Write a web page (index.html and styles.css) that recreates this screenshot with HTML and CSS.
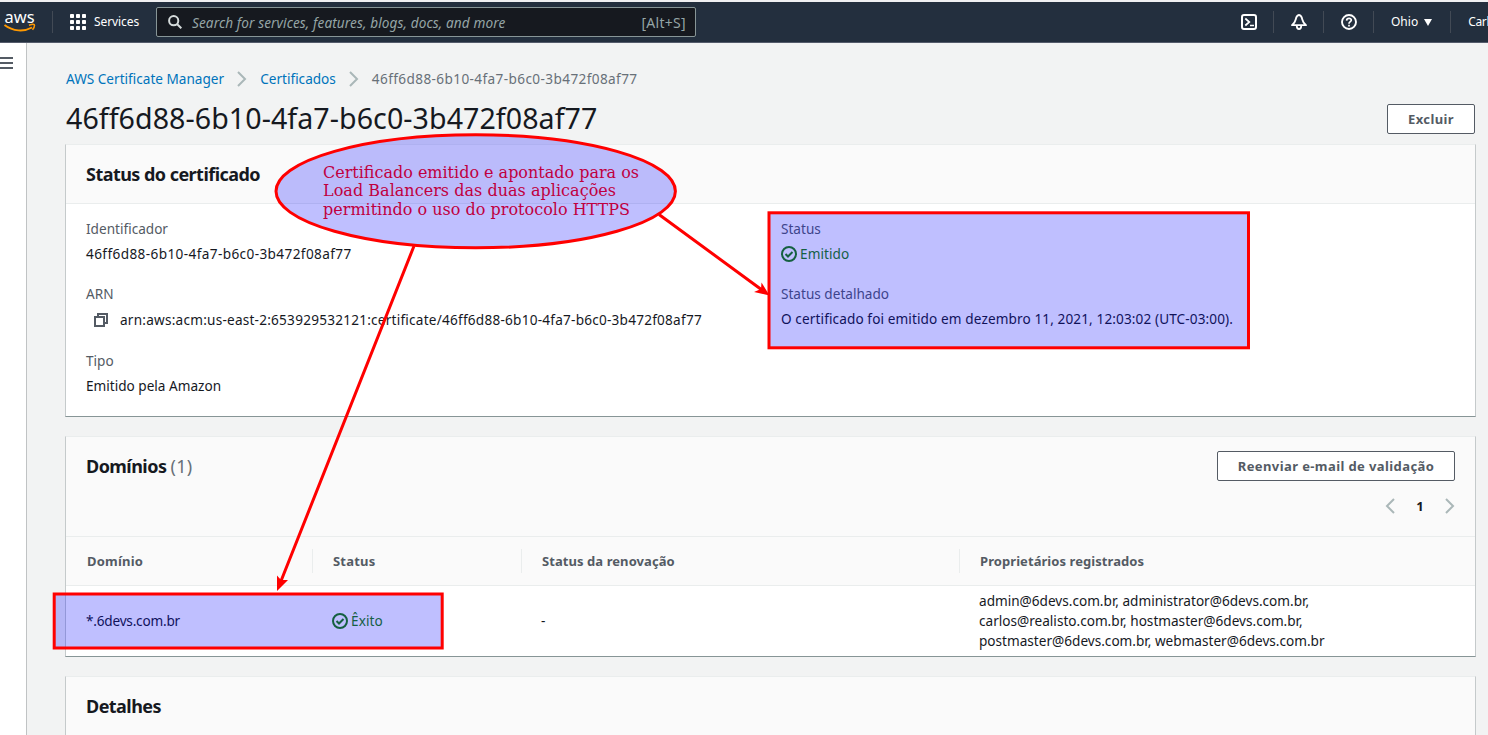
FILE: index.html
```html
<!DOCTYPE html>
<html lang="pt-BR">
<head>
<meta charset="utf-8">
<title>AWS Certificate Manager</title>
<link rel="stylesheet" href="styles.css">
</head>
<body>
<header class="nav">
  <svg class="nav-logo" width="32" height="24" viewBox="0 0 32 24">
    <text class="logo-text" x="0.5" y="12.500" textLength="30" lengthAdjust="spacingAndGlyphs">aws</text>
    <path d="M0.500 15C9 21.500 20 22 28 17.500" fill="none" stroke="#f90" stroke-width="1.900"/>
    <path d="M25 15.200Q30.500 13.500 30.500 15.200Q30.500 17.500 28.500 19.800" fill="none" stroke="#f90" stroke-width="1.500"/>
  </svg>
  <i class="nav-sep sep-logo"></i>
  <svg class="nav-grid" width="16" height="16" viewBox="0 0 16 16" fill="#fff">
    <rect width="4" height="4" rx=".8"/><rect x="6" width="4" height="4" rx=".8"/><rect x="12" width="4" height="4" rx=".8"/>
    <rect y="6" width="4" height="4" rx=".8"/><rect x="6" y="6" width="4" height="4" rx=".8"/><rect x="12" y="6" width="4" height="4" rx=".8"/>
    <rect y="12" width="4" height="4" rx=".8"/><rect x="6" y="12" width="4" height="4" rx=".8"/><rect x="12" y="12" width="4" height="4" rx=".8"/>
  </svg>
  <span class="nav-text services">Services</span>
  <div class="search">
    <svg width="14" height="14" viewBox="0 0 14 14" fill="none" stroke="#d5dbdb" stroke-width="2"><circle cx="5.700" cy="5.700" r="4.600"/><path d="M9 9l4.300 4.300"/></svg>
    <span class="search-hint">Search for services, features, blogs, docs, and more</span>
    <span class="search-key">[Alt+S]</span>
  </div>
  <div class="nav-right">
    <svg width="16" height="16" viewBox="0 0 16 16" fill="none" stroke="#fff" stroke-width="2"><rect x="1" y="1" width="14" height="14" rx="2"/><path d="M4.300 4.500l4 3.500-4 3.500M9 11.500h4" stroke-width="1.700"/></svg>
    <i class="nav-sep"></i>
    <svg width="16" height="16" viewBox="0 0 16 16" fill="none" stroke="#fff" stroke-width="1.800"><path d="M8 1C6.200 1.200 5.200 3 4.700 5.500C4.200 7.800 3 9.500 1 11.200H15C13 9.500 11.800 7.800 11.300 5.500C10.800 3 9.800 1.200 8 1ZM5.800 12C5.900 16 10.100 16 10.200 12" stroke-linejoin="round"/></svg>
    <i class="nav-sep"></i>
    <svg width="16" height="16" viewBox="0 0 16 16" fill="none" stroke="#fff" stroke-width="1.900"><circle cx="8" cy="8" r="7"/><path d="M5.600 6.600C5.700 3.500 10.500 3.700 10.300 6.300C10.200 7.700 8 7.700 8 9.700M8 10.700v1.800" stroke-width="1.700"/></svg>
    <i class="nav-sep"></i>
    <span class="nav-text ohio">Ohio</span><i class="caret"></i>
    <i class="nav-sep sep-user"></i>
    <span class="nav-text user">Carlos</span>
  </div>
</header>
<div class="shell">
  <aside class="side"><div class="burger"><i></i><i></i><i></i></div></aside>
  <main class="main">
    <nav class="crumbs">
      <a class="link">AWS Certificate Manager</a>
      <svg width="10" height="16" viewBox="0 0 10 16" fill="none" stroke="#aab7b8" stroke-width="2"><path d="M1 1l7 7-7 7"/></svg>
      <a class="link">Certificados</a>
      <svg width="10" height="16" viewBox="0 0 10 16" fill="none" stroke="#aab7b8" stroke-width="2"><path d="M1 1l7 7-7 7"/></svg>
      <span class="hash">46ff6d88-6b10-4fa7-b6c0-3b472f08af77</span>
    </nav>
    <div class="title-row">
      <h1>46ff6d88-6b10-4fa7-b6c0-3b472f08af77</h1>
      <button class="btn btn-del">Excluir</button>
    </div>
    <section class="card status-card">
      <div class="card-head"><h2>Status do certificado</h2></div>
      <div class="details">
        <dl>
          <dt>Identificador</dt>
          <dd class="hash">46ff6d88-6b10-4fa7-b6c0-3b472f08af77</dd>
          <dt>ARN</dt>
          <dd class="arn"><svg width="14" height="14" viewBox="0 0 14 14" fill="none" stroke="#545b64" stroke-width="2"><path d="M1 4h9v9H1zM4 4V1h9v9h-3"/></svg><span class="arn-text">arn:aws:acm:us-east-2:653929532121:certificate/46ff6d88-6b10-4fa7-b6c0-3b472f08af77</span></dd>
          <dt>Tipo</dt>
          <dd>Emitido pela Amazon</dd>
        </dl>
        <dl>
          <dt>Status</dt>
          <dd class="ok"><svg width="16" height="16" viewBox="0 0 16 16" fill="none" stroke="#1d8102" stroke-width="2"><circle cx="8" cy="8" r="7"/><path d="M4.500 8l2.500 2.500 4.500-4.500"/></svg>Emitido</dd>
          <dt>Status detalhado</dt>
          <dd class="issued">O certificado foi emitido em dezembro 11, 2021, 12:03:02 (UTC-03:00).</dd>
        </dl>
      </div>
    </section>
    <section class="card domain-card">
      <div class="domain-head">
        <div class="domain-top">
          <h2>Domínios <span class="count">(1)</span></h2>
          <button class="btn btn-mail">Reenviar e-mail de validação</button>
        </div>
        <div class="pager">
          <svg width="10" height="16" viewBox="0 0 10 16" fill="none" stroke="#aab7b8" stroke-width="2"><path d="M9 1L2 8l7 7"/></svg>
          <b>1</b>
          <svg width="10" height="16" viewBox="0 0 10 16" fill="none" stroke="#aab7b8" stroke-width="2"><path d="M1 1l7 7-7 7"/></svg>
        </div>
      </div>
      <div class="row thead">
        <div class="th-short">Domínio</div><div class="th-short">Status</div><div>Status da renovação</div><div>Proprietários registrados</div>
      </div>
      <div class="row tbody">
        <div class="domain">*.6devs.com.br</div>
        <div class="ok"><svg width="16" height="16" viewBox="0 0 16 16" fill="none" stroke="#1d8102" stroke-width="2"><circle cx="8" cy="8" r="7"/><path d="M4.500 8l2.500 2.500 4.500-4.500"/></svg>Êxito</div>
        <div>-</div>
        <div class="owners">admin@6devs.com.br, administrator@6devs.com.br,<br>carlos@realisto.com.br, hostmaster@6devs.com.br,<br>postmaster@6devs.com.br, webmaster@6devs.com.br</div>
      </div>
    </section>
    <section class="card last-card"><div class="card-head"><h2>Detalhes</h2></div></section>
  </main>
</div>
<svg class="notes" width="1488" height="735" viewBox="0 0 1488 735">
  <g fill="#00f" fill-opacity=".25" stroke="#f00" stroke-width="3">
    <ellipse cx="475.700" cy="191.300" rx="199.700" ry="56.500"/>
    <rect x="769" y="212.800" width="479.500" height="135"/>
    <rect x="54.200" y="594" width="388" height="54"/>
  </g>
  <g stroke="#f00" stroke-width="3" fill="#f00">
    <path d="M414 246L281 581M659 214.500L762 290"/>
    <path stroke="none" d="M277 591V575.500L281 580L288 580ZM769.500 295.500L761.500 282.500L761 289L754 292Z"/>
  </g>
  <g class="note-text">
    <text x="323" y="178" textLength="316">Certificado emitido e apontado para os</text>
    <text x="323" y="196" textLength="293">Load Balancers das duas aplicações</text>
    <text x="323" y="215" textLength="307">permitindo o uso do protocolo HTTPS</text>
  </g>
</svg>
</body>
</html>
```
FILE: styles.css
```css
* { box-sizing: border-box; }
body {
  margin: 0;
  width: 1488px;
  height: 735px;
  overflow: hidden;
  position: relative;
  background: #f2f3f3;
  color: #16191f;
  font: 13.6px/20px "Noto Sans", sans-serif;
}
h1, h2, dl, dd { margin: 0; }
svg { display: block; flex: none; }
.nav {
  height: 43px;
  border-top: 2px solid #f0f0f2;
  border-bottom: 1px solid #545b6b;
  background: #232f3e;
  display: flex;
  align-items: center;
  white-space: nowrap;
  overflow: hidden;
}
.nav-logo { margin-left: 4px; overflow: visible; }
.logo-text { font: 400 16px "Noto Sans", sans-serif; fill: #fff; }
.nav-sep { width: 1px; height: 22px; background: #424a55; flex: none; }
.sep-logo { margin: 0 17px 0 16px; }
.nav-text { font-size: 12px; color: #fff; }
.services { margin-left: 8px; width: 62px; flex: none; letter-spacing: -.08px; }
.user { letter-spacing: -.3px; }
.search {
  width: 540px;
  height: 30px;
  flex: none;
  display: flex;
  align-items: center;
  border: 1px solid #879596;
  border-radius: 2px;
  background: #16191f;
  color: #95a5a6;
  padding: 2px 9px 0 11px;
}
.search svg { margin-top: -2px; }
.search-hint { margin-left: 10px; font-style: italic; letter-spacing: .11px; }
.search-key { margin-left: auto; font-size: 14px; letter-spacing: .3px; }
.nav-right { display: flex; align-items: center; margin-left: 545px; flex: none; }
.nav-right .nav-sep { margin: 0 17px 0 16px; }
.nav-right .sep-user { margin-left: 18px; }
.caret { border: 4px solid transparent; border-top: 7px solid #fff; border-bottom: 0; margin-left: 6px; }
.shell { display: flex; height: 692px; }
.side { width: 27px; background: #fff; border-right: 1px solid #c0c3c4; flex: none; }
.burger { display: flex; flex-direction: column; gap: 3px; padding-top: 14px; }
.burger i { width: 13px; height: 2px; background: #545b64; }
.main { width: 1449px; padding: 26px 0 0 38px; flex: none; }
.crumbs { display: flex; height: 20px; align-items: center; color: #687078; padding-left: 1px; }
.link { color: #0073bb; }
.crumbs svg { margin: 0 13px; }
.hash { letter-spacing: .39px; }
.title-row {
  display: flex;
  justify-content: space-between;
  align-items: center;
  width: 1410px;
  height: 30px;
  margin: 15px 0 10px;
  padding-left: 1px;
}
h1 { font-size: 28.6px; line-height: 28px; padding-bottom: 2px; font-weight: 400; letter-spacing: .06px; }
.btn {
  height: 30px;
  border: 1px solid #545b64;
  border-radius: 2px;
  background: #fff;
  color: #545b64;
  font: 700 13px/20px "Noto Sans", sans-serif;
  letter-spacing: .4px;
  padding: 0;
  text-align: center;
  white-space: nowrap;
}
.btn-del { width: 88px; }
.btn-mail { width: 238px; }
.card {
  width: 1411px;
  border: 1px solid #c5cacb;
  border-top-color: #eaeded;
  border-bottom-color: #879596;
  background: #fff;
  margin-bottom: 19px;
}
.status-card { height: 273px; }
.domain-card { height: 221px; }
.last-card { height: 80px; }
.card-head { height: 59px; background: #fafafa; border-bottom: 1px solid #eaeded; padding: 19px 20px; }
h2 { font-size: 18px; line-height: 20px; font-weight: 700; letter-spacing: -.54px; }
.details { display: grid; grid-template-columns: 695px 1fr; padding: 15px 20px; }
dt { color: #545b64; height: 20px; }
dd { height: 20px; margin: 5px 0 20px; }
.arn { display: flex; align-items: center; gap: 12px; padding-left: 8px; margin: 6px 0 21px; }
.arn-text { letter-spacing: .23px; }
.issued { letter-spacing: .11px; }
.ok { display: flex; align-items: center; gap: 3px; color: #1d8102; letter-spacing: .08px; }
.domain-head { height: 100px; background: #fafafa; border-bottom: 1px solid #eaeded; padding: 14px 20px; }
.domain-top { display: flex; align-items: center; justify-content: space-between; }
.count { font-weight: 400; color: #687078; letter-spacing: .3px; }
.pager { display: flex; justify-content: flex-end; align-items: center; margin-top: 15px; height: 20px; }
.pager b { width: 50px; text-align: center; font-size: 13px; }
.row { display: grid; grid-template-columns: 246px 209px 438px 1fr; }
.thead {
  height: 49px;
  background: #fafafa;
  border-bottom: 1px solid #eaeded;
  color: #545b64;
  font-size: 13px;
  font-weight: 700;
  letter-spacing: .07px;
  align-items: center;
}
.thead div { height: 24px; line-height: 24px; padding-left: 20px; border-left: 1px solid #eaeded; }
.thead .th-short { letter-spacing: .2px; }
.thead div:first-child { border-color: transparent; }
.tbody { height: 70px; align-items: center; }
.tbody div { padding-left: 20px; }
.tbody .domain { letter-spacing: -.2px; }
.notes { position: absolute; left: 0; top: 0; }
.note-text { font: 16px "DejaVu Serif", serif; fill: #c0003f; }
```
